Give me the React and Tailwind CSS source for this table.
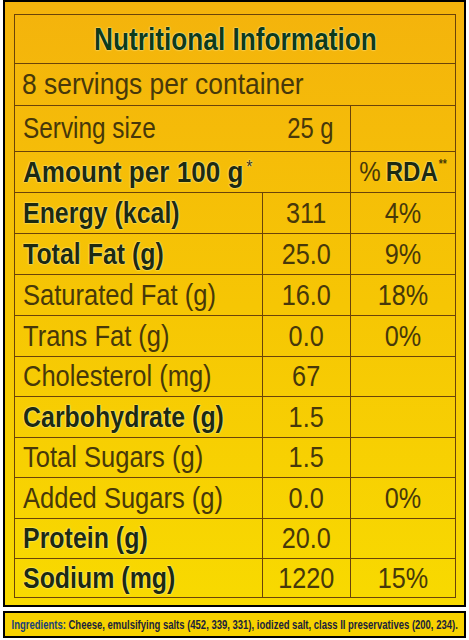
import React from "react";

const rows = [
    { label: "Energy (kcal)", value: "311", rda: "4%", bold: true, h: "h-[41px]" },
    { label: "Total Fat (g)", value: "25.0", rda: "9%", bold: true, h: "h-[41px]" },
    { label: "Saturated Fat (g)", value: "16.0", rda: "18%", h: "h-[41px]" },
    { label: "Trans Fat (g)", value: "0.0", rda: "0%", h: "h-[41px]" },
    { label: "Cholesterol (mg)", value: "67", rda: "", h: "h-[40px]" },
    { label: "Carbohydrate (g)", value: "1.5", rda: "", bold: true, h: "h-[41px]" },
    { label: "Total Sugars (g)", value: "1.5", rda: "", h: "h-[40px]" },
    { label: "Added Sugars (g)", value: "0.0", rda: "0%", h: "h-[41px]" },
    { label: "Protein (g)", value: "20.0", rda: "", bold: true, h: "h-[40px]" },
    { label: "Sodium (mg)", value: "1220", rda: "15%", bold: true, h: "h-[38px]", last: true },
];

const boldText =
    "font-bold text-[#1d2a10] [text-shadow:0_0_2px_#fff9b0,0_0_1px_#fff9b0]";
const plainText = "text-[#47380a]";
const line = "border-[#6b4308]";

export default function App() {
    return (
        <div
            className="w-[469px] h-[640px] bg-white overflow-hidden"
            style={{ fontFamily: '"Liberation Sans", Arial, sans-serif' }}
        >
            <div className="mx-[3px] h-[607px] border-2 border-black bg-gradient-to-b from-[#f4b30c] via-[#f6c604] to-[#f8da00] pl-[9px] pr-[8px] pt-[12px]">
                <div className={`w-[442px] border-[1.5px] ${line} leading-none`}>
                    {/* Title */}
                    <div className={`h-[49px] flex items-center justify-center border-b-[1.5px] ${line}`}>
                        <span className="inline-block whitespace-nowrap scale-x-[0.82] origin-center text-[32px] font-bold text-[#0e3b1a] [text-shadow:0_0_2px_#fffbc0,0_0_1px_#fffbc0]">
                            Nutritional Information
                        </span>
                    </div>

                    {/* Servings */}
                    <div className={`h-[42px] flex items-center px-[7px] border-b-[1.5px] ${line}`}>
                        <span className={`inline-block whitespace-nowrap scale-x-[0.91] origin-left text-[29px] ${plainText}`}>
                            8 servings per container
                        </span>
                    </div>

                    {/* Serving size */}
                    <div className={`h-[46px] flex border-b-[1.5px] ${line}`}>
                        <div className={`w-[336px] flex items-center justify-between pl-[8px] pr-[17px] border-r-[1.5px] ${line}`}>
                            <span className={`inline-block scale-x-[0.84] origin-left text-[29px] ${plainText}`}>
                                Serving size
                            </span>
                            <span className={`inline-block scale-x-[0.82] origin-right text-[29px] ${plainText}`}>
                                25 g
                            </span>
                        </div>
                        <div className="flex-1" />
                    </div>

                    {/* Amount header */}
                    <div className={`h-[41px] flex border-b-[1.5px] ${line}`}>
                        <div className={`w-[336px] flex items-center pl-[8px] border-r-[1.5px] ${line}`}>
                            <span className={`inline-block whitespace-nowrap scale-x-[0.9] origin-left text-[29px] ${boldText}`}>
                                Amount per 100 g
                                <span className="align-top text-[18px] font-normal ml-[3px] text-[#3a3006]">*</span>
                            </span>
                        </div>
                        <div className="flex-1 flex items-center justify-center">
                            <span className="inline-block whitespace-nowrap scale-x-[0.86] origin-center">
                                <span className={`text-[28px] ${plainText}`}>%</span>
                                <span className={`text-[28px] ml-[6px] ${boldText}`}>RDA</span>
                                <span className="align-top text-[12px] text-[#4a3a06] font-bold ml-[1px]">**</span>
                            </span>
                        </div>
                    </div>

                    {/* Nutrient rows */}
                    {rows.map((r) => (
                        <div key={r.label} className={`${r.h} flex ${r.last ? "" : `border-b-[1.5px] ${line}`}`}>
                            <div className={`w-[248px] flex items-center pl-[8px] border-r-[1.5px] ${line}`}>
                                <span
                                    className={`inline-block whitespace-nowrap origin-left text-[29px] ${
                                        r.bold ? `scale-x-[0.86] ${boldText}` : `scale-x-[0.88] ${plainText}`
                                    }`}
                                >
                                    {r.label}
                                </span>
                            </div>
                            <div className={`w-[88px] flex items-center justify-center border-r-[1.5px] ${line}`}>
                                <span className={`inline-block scale-x-[0.87] origin-center text-[29px] ${plainText}`}>
                                    {r.value}
                                </span>
                            </div>
                            <div className="flex-1 flex items-center justify-center">
                                <span className={`inline-block scale-x-[0.87] origin-center text-[29px] ${plainText}`}>
                                    {r.rda}
                                </span>
                            </div>
                        </div>
                    ))}
                </div>
            </div>

            {/* Ingredients */}
            <div className="mx-[3px] mt-[4px] h-[27px] border-2 border-black bg-[#f7d200] flex items-center justify-center overflow-hidden">
                <p className="inline-block shrink-0 scale-x-[0.73] origin-center text-[13px] font-bold text-[#1b1f3a] leading-none whitespace-nowrap">
                    <span className="text-[#173f7a]">Ingredients:</span> Cheese, emulsifying salts (452, 339,
                    331), iodized salt, class II preservatives (200, 234).
                </p>
            </div>
        </div>
    );
}
